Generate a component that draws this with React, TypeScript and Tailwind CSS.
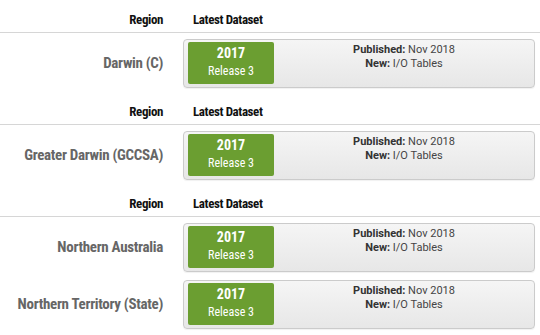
import React from 'react';

type Row = { name: string };
type Group = { rows: Row[] };

const groups: Group[] = [
  { rows: [{ name: 'Darwin (C)' }] },
  { rows: [{ name: 'Greater Darwin (GCCSA)' }] },
  { rows: [{ name: 'Northern Australia' }, { name: 'Northern Territory (State)' }] },
];

const cond = "font-['Roboto_Condensed','Liberation_Sans_Narrow','DejaVu_Sans_Condensed',Roboto,sans-serif]";

const DatasetCard: React.FC = () => (
  <div className="flex h-[49px] items-start rounded-[4px] border border-[#cbcbcb] bg-gradient-to-b from-[#f5f5f5] to-[#e7e7e7] pl-[4px] pt-[2px] shadow-[0_1px_1px_rgba(0,0,0,0.06)]">
    <div className="flex h-[42px] w-[86px] shrink-0 flex-col items-center rounded-[2px] bg-[#6b9e31] pt-[1px] text-white">
      <span className={`${cond} text-[14px] font-bold leading-[20px]`}>2017</span>
      <span className={`${cond} text-[12px] leading-[16px]`}>Release 3</span>
    </div>
    <div className="flex flex-1 flex-col items-center pt-[1px] font-['Roboto',sans-serif] text-[11px] leading-[14px] text-[#444]">
      <div>
        <span className="font-bold text-[#333]">Published:</span> Nov 2018
      </div>
      <div>
        <span className="font-bold text-[#333]">New:</span> I/O Tables
      </div>
    </div>
  </div>
);

export default function App() {
  return (
    <div className="w-[540px] bg-white">
      {groups.map((g, gi) => (
        <div key={gi} className={gi > 0 ? 'pt-[2px]' : ''}>
          <div className={`flex h-[33px] items-end border-b border-[#d6d6d6] pb-[4px] ${cond} text-[13px] font-bold leading-[16px] tracking-[-0.4px] text-[#111]`}>
            <div className="w-[183px] pr-[20px] text-right">Region</div>
            <div className="pl-[10px]">Latest Dataset</div>
          </div>
          {g.rows.map((r) => (
            <div key={r.name} className="flex items-center pb-[2px] pt-[6px]">
              <div className={`w-[183px] pr-[20px] text-right ${cond} text-[15px] font-bold tracking-[-0.3px] text-[#666]`}>{r.name}</div>
              <div className="flex-1 pr-[5px]">
                <DatasetCard />
              </div>
            </div>
          ))}
        </div>
      ))}
    </div>
  );
}
